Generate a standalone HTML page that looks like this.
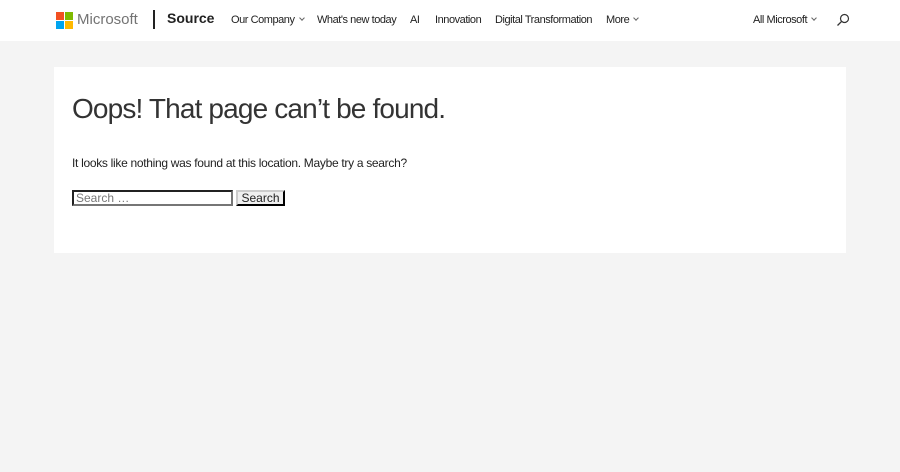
<!DOCTYPE html>
<html><head><style>
*{margin:0;padding:0;box-sizing:border-box}
body{width:900px;height:472px;background:#f4f4f4;font-family:"Liberation Sans",sans-serif;color:#222;position:relative;overflow:hidden}
.hdr{position:absolute;left:0;top:0;width:900px;height:41px;background:#fff}
.t{position:absolute;white-space:nowrap}
.nav{font-size:11px;color:#222;top:14px;letter-spacing:-0.45px}
.chev{display:inline-block;width:4px;height:4px;border-right:1px solid #666;border-bottom:1px solid #666;transform:rotate(45deg);margin-left:5px;vertical-align:3px}
.card{position:absolute;left:54px;top:67px;width:792px;height:186px;background:#fff}
</style></head><body>
<div class="hdr">
<div style="position:absolute;left:56px;top:12px;width:8px;height:8px;background:#f25022"></div>
<div style="position:absolute;left:65px;top:12px;width:8px;height:8px;background:#7fba00"></div>
<div style="position:absolute;left:56px;top:21px;width:8px;height:8px;background:#00a4ef"></div>
<div style="position:absolute;left:65px;top:21px;width:8px;height:8px;background:#ffb900"></div>
<div class="t" style="left:77px;top:11px;font-size:15px;color:#737373">Microsoft</div>
<div style="position:absolute;left:153px;top:10px;width:2px;height:19px;background:#222"></div>
<div class="t" style="left:167px;top:10px;font-size:14px;font-weight:bold">Source</div>
<div class="t nav" style="left:231px">Our Company<span class="chev"></span></div>
<div class="t nav" style="left:317px">What's new today</div>
<div class="t nav" style="left:410px">AI</div>
<div class="t nav" style="left:435px">Innovation</div>
<div class="t nav" style="left:495px">Digital Transformation</div>
<div class="t nav" style="left:606px">More<span class="chev"></span></div>
<div class="t nav" style="left:753px">All Microsoft<span class="chev"></span></div>
<svg style="position:absolute;left:836px;top:13px" width="14" height="14" viewBox="0 0 14 14"><circle cx="8.5" cy="5.5" r="4" fill="none" stroke="#333" stroke-width="1.2"/><line x1="5.6" y1="8.4" x2="1.5" y2="12.5" stroke="#333" stroke-width="1.3"/></svg>
</div>
<div class="card">
<div class="t" style="left:18px;top:26px;font-size:28px;letter-spacing:-0.85px;color:#333">Oops! That page can’t be found.</div>
<div class="t" style="left:18px;top:89px;font-size:12px;letter-spacing:-0.3px">It looks like nothing was found at this location. Maybe try a search?</div>
<div style="position:absolute;left:18px;top:123px;width:161px;height:16px;border:2px inset #767676;background:#fff;font-size:12px;color:#777;padding-left:2px;line-height:12px">Search …</div>
<div style="position:absolute;left:182px;top:123px;width:49px;height:16px;border:2px outset #333;border-color:#ccc #222 #222 #ccc;background:#efefef;font-size:12px;line-height:12px;text-align:center">Search</div>
</div>
</body></html>
